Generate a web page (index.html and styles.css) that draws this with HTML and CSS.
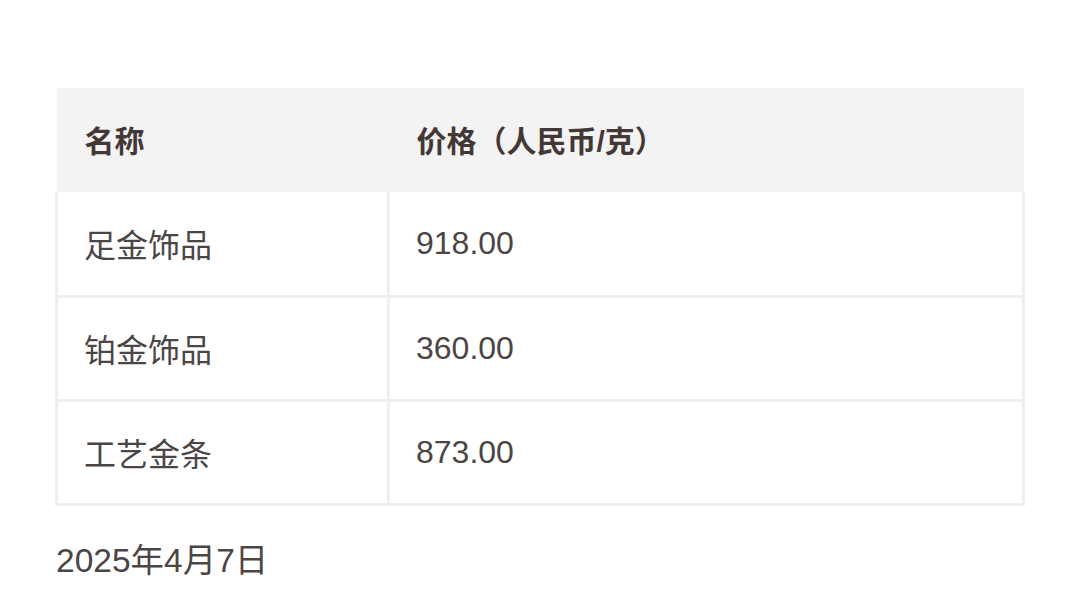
FILE: index.html
```html
<!DOCTYPE html>
<html lang="zh">
<head>
<meta charset="utf-8">
<link rel="stylesheet" href="styles.css">
</head>
<body>
<div class="page">
  <table class="price-table">
    <thead>
      <tr><th class="col-name">名称</th><th>价格（人民币/克）</th></tr>
    </thead>
    <tbody>
      <tr><td class="col-name">足金饰品</td><td>918.00</td></tr>
      <tr><td class="col-name">铂金饰品</td><td>360.00</td></tr>
      <tr><td class="col-name">工艺金条</td><td>873.00</td></tr>
    </tbody>
  </table>
  <p class="date">2025年4月7日</p>
</div>
</body>
</html>
```
FILE: styles.css
```css
html, body { margin: 0; padding: 0; background: #fff; }
body {
  font-family: "Liberation Sans", "Noto Sans CJK SC", sans-serif;
  color: #4b4544;
}
.page { padding: 88px 56px 0 55px; }
.price-table {
  width: 970px;
  border-collapse: collapse;
  table-layout: fixed;
}
.price-table th {
  background: #f3f3f3;
  height: 104px;
  text-align: left;
  font-size: 30px;
  font-weight: 700;
  color: #433836;
  padding: 0 0 2px 28px;
  box-sizing: border-box;
}
.price-table th.col-name { width: 332px; }
.price-table td {
  height: 104px;
  border: 3px solid #efefef;
  padding: 0 0 0 26px;
  font-size: 32px;
  font-weight: 400;
  box-sizing: border-box;
}
.price-table tbody tr:first-child td { border-top: 0; }
.date {
  margin: 33px 0 0 1px;
  font-size: 33.5px;
  line-height: 44px;
  color: #4b4544;
}
```
